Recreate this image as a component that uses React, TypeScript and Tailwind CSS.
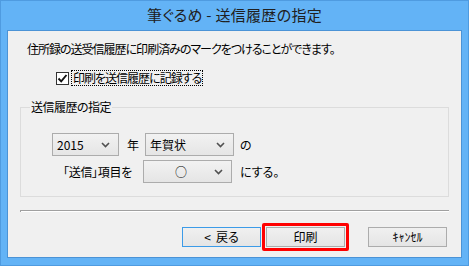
import React from "react";

const font = { fontFamily: '"Noto Sans CJK JP", "Noto Sans", sans-serif' };

function Chevron() {
  return (
    <svg width="9" height="6" viewBox="0 0 9 6" className="shrink-0">
      <path d="M1 1 L4.5 4.5 L8 1" fill="none" stroke="#505050" strokeWidth="1.6" />
    </svg>
  );
}

function Select({ w, children, center }: { w: string; children: React.ReactNode; center?: boolean }) {
  return (
    <div
      className={`${w} h-[23px] flex items-center border border-[#acacac] bg-gradient-to-b from-[#f2f2f2] to-[#e5e5e5] pl-[4px] pr-[8px]`}
    >
      <div className={`flex-1 text-[12px] leading-none text-[#000] ${center ? "text-center" : ""}`}>{children}</div>
      <Chevron />
    </div>
  );
}

function Button({ children, blue, className = "" }: { children: React.ReactNode; blue?: boolean; className?: string }) {
  return (
    <div
      className={`w-[79px] h-[20px] flex items-center justify-center text-[12px] leading-none text-black border ${
        blue ? "border-[#3c9be8]" : "border-[#acacac]"
      } bg-gradient-to-b from-[#f0f0f0] to-[#e5e5e5] ${className}`}
    >
      {children}
    </div>
  );
}

export default function App() {
  return (
    <div
      className="w-[469px] h-[266px] bg-[#63b3f6] border border-[#4f9be0] flex flex-col [font-feature-settings:'palt']"
      style={font}
    >
      <div className="h-[29px] flex items-center justify-center text-[15px] text-[#202020] tracking-[0.3px]">
        筆ぐるめ - 送信履歴の指定
      </div>
      <div className="mx-[6px] h-[228px] border border-[#4b93d6] bg-[#f0f0f0] flex flex-col">
        <div className="ml-[19px] mt-[10px] h-[16px] text-[12px] leading-[16px] text-black tracking-[-1px]">
          住所録の送受信履歴に印刷済みのマークをつけることができます。
        </div>
        <div className="ml-[48px] mt-[13px] flex items-center h-[16px]">
          <div className="w-[13px] h-[13px] border border-[#333] bg-white flex items-center justify-center">
            <svg width="11" height="11" viewBox="0 0 11 11">
              <path d="M1.5 5.5 L4.2 8.3 L9.5 2" fill="none" stroke="#111" strokeWidth="1.9" />
            </svg>
          </div>
          <div className="ml-[2px] px-[1px] border border-dotted border-black text-[12px] leading-[14px] text-black tracking-[-1px]">
            印刷を送信履歴に記録する
          </div>
        </div>
        <div className="relative ml-[12px] mt-[21px] w-[429px] h-[90px] border border-[#dcdcdc]">
          <span className="absolute left-[9px] top-[-9px] px-[1px] bg-[#f0f0f0] text-[12px] leading-[16px] text-black tracking-[-0.5px]">
            送信履歴の指定
          </span>
          <div className="ml-[31px] mt-[25px] flex items-center">
            <Select w="w-[67px]">2015</Select>
            <span className="ml-[8px] w-[17px] text-[12px] text-black">年</span>
            <div className="ml-[1px]">
              <Select w="w-[89px]">年賀状</Select>
            </div>
            <span className="ml-[6px] text-[12px] text-black">の</span>
          </div>
          <div className="ml-[42px] mt-[4px] flex items-center">
            <span className="w-[80px] text-[12px] text-black tracking-[-0.3px]">「送信」項目を</span>
            <Select w="w-[89px]" center>
              ○
            </Select>
            <span className="ml-[8px] text-[12px] text-black">にする。</span>
          </div>
        </div>
        <div className="relative ml-[12px] mt-[13px] w-[429px] h-[2px] border-t border-[#a0a0a0] border-b border-b-white">
          <span className="absolute left-0 top-[-1px] w-[1px] h-[2px] bg-[#a0a0a0]" />
        </div>
        <div className="mt-[11px] flex items-center">
          <div className="ml-[174px]">
            <Button blue>
              <span>&lt;</span>
              <span className="ml-[5px]">戻る</span>
            </Button>
          </div>
          <div className="ml-[1px] border-[3px] border-[#ff0000] rounded-[2px] p-[1px]">
            <Button>印刷</Button>
          </div>
          <div className="ml-[19px]">
            <Button>ｷｬﾝｾﾙ</Button>
          </div>
        </div>
      </div>
    </div>
  );
}
